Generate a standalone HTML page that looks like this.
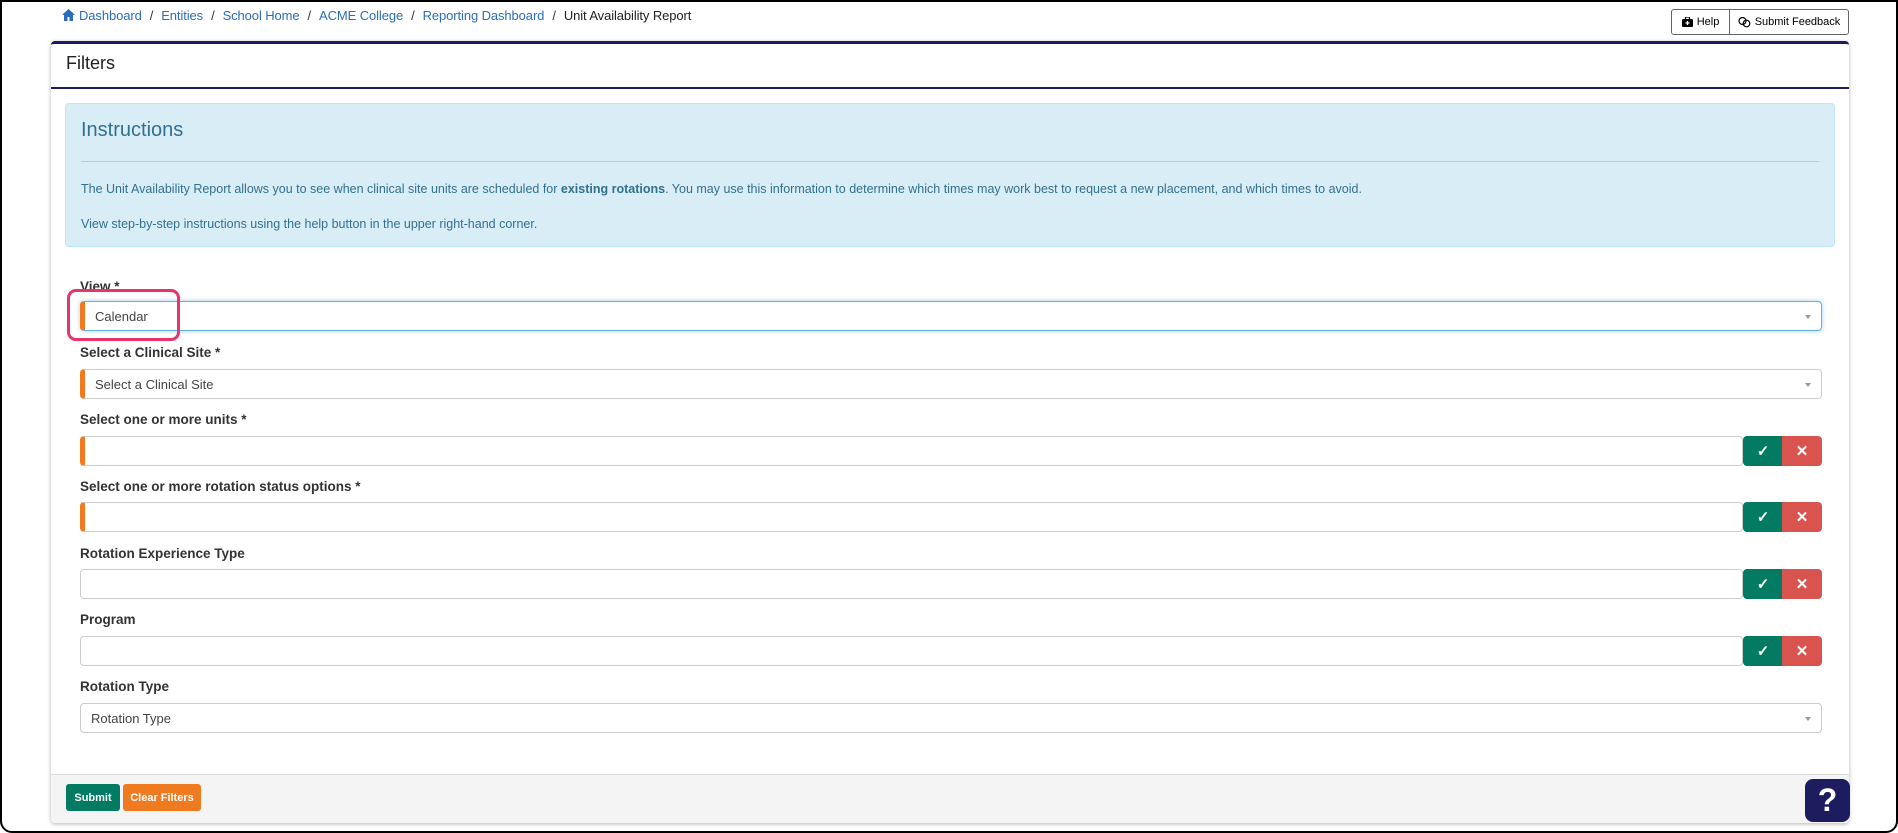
<!DOCTYPE html>
<html><head><meta charset="utf-8"><style>
*{box-sizing:border-box;margin:0;padding:0}
body{width:1898px;height:833px;background:#fff;font-family:"Liberation Sans",sans-serif;position:relative;overflow:hidden;color:#333}
.frame{position:absolute;left:0;top:0;width:1898px;height:833px;border:2px solid #000;border-radius:0 0 12px 12px;pointer-events:none;z-index:10}
.abs{position:absolute}
.bc{left:62px;top:8px;font-size:13px;color:#2a6ebb;white-space:nowrap;letter-spacing:-0.1px}
.bc span.s{color:#333;margin:0 8px}
.bc .cur{color:#222}
.hb{top:9px;height:26px;border:1px solid #666;background:#fff;font-size:11px;color:#000;display:flex;align-items:center;justify-content:center;gap:4px}
.card{left:51px;top:41px;width:1798px;height:782px;border-top:3px solid #1c1c5e;border-radius:4px;box-shadow:0 1px 4px rgba(0,0,0,.3);background:#fff}
.hdr{left:51px;top:44px;width:1798px;height:45px;border-bottom:2px solid #1c1c5e}
.hdr div{position:absolute;left:15px;top:9px;font-size:18px;color:#222}
.ins{left:65px;top:103px;width:1770px;height:144px;background:#d9edf7;border:1px solid #bce8f1;border-radius:4px;color:#31708f}
.ins h3{position:absolute;left:15px;top:15px;font-size:20px;font-weight:normal}
.ins hr{position:absolute;left:15px;right:15px;top:57px;border:0;border-top:1px solid #a6d3e3}
.ins p{position:absolute;left:15px;font-size:12.5px}
.lbl{left:80px;font-size:13.5px;font-weight:bold;color:#333}
.inp{left:80px;width:1663px;height:30px;border:1px solid #ccc;border-radius:4px;background:#fff}
.sel{width:1742px}
.or{border-left:5px solid #f07a1f}
.inp .t{position:absolute;left:10px;top:7px;font-size:13px;color:#444}
.inp .car{position:absolute;right:10px;top:13px;border:3px solid transparent;border-top:4px solid #999}
.ok,.no{width:40px;height:30px;color:#fff;display:flex;align-items:center;justify-content:center;font-size:15px;font-weight:bold}
.ok{left:1743px;background:#037b62;border-radius:4px 0 0 4px}
.no{left:1782px;background:#d9534f;border-radius:0 4px 4px 0}
.foot{left:51px;top:774px;width:1798px;height:49px;background:#f4f4f4;border-top:1px solid #ddd;border-radius:0 0 4px 4px}
.btn{top:784px;height:27px;color:#fff;font-size:11px;font-weight:bold;display:flex;align-items:center;justify-content:center;border-radius:3px}
</style></head><body>
<div class="frame"></div>
<div class="abs bc"><svg width="13" height="12" viewBox="0 0 13 12" style="vertical-align:-1px;margin-right:4px"><path d="M6.5 0L0 6h2v6h3.5V8h2v4H11V6h2z" fill="#2a6ebb"/></svg>Dashboard<span class="s">/</span>Entities<span class="s">/</span>School Home<span class="s">/</span>ACME College<span class="s">/</span>Reporting Dashboard<span class="s">/</span><span class="cur">Unit Availability Report</span></div>
<div class="abs hb" style="left:1671px;width:59px;border-radius:3px 0 0 3px"><svg width="11" height="10" viewBox="0 0 11 10"><rect x="0" y="2" width="11" height="8" rx="1" fill="#000"/><rect x="3.5" y="0" width="4" height="3" fill="none" stroke="#000" stroke-width="1.2"/><path d="M5.5 4v4M3.5 6h4" stroke="#fff" stroke-width="1.3"/></svg><b style="font-weight:normal">Help</b></div>
<div class="abs hb" style="left:1729px;width:120px;border-radius:0 3px 3px 0"><svg width="13" height="11" viewBox="0 0 13 11"><circle cx="4.5" cy="4" r="3.5" fill="none" stroke="#000" stroke-width="1.2"/><circle cx="8.5" cy="6.5" r="3.3" fill="none" stroke="#000" stroke-width="1.2"/></svg>Submit Feedback</div>
<div class="abs card"></div>
<div class="abs hdr"><div>Filters</div></div>
<div class="abs ins"><h3>Instructions</h3><hr><p style="top:78px">The Unit Availability Report allows you to see when clinical site units are scheduled for <b>existing rotations</b>. You may use this information to determine which times may work best to request a new placement, and which times to avoid.</p><p style="top:113px">View step-by-step instructions using the help button in the upper right-hand corner.</p></div>

<div class="abs lbl" style="top:279px">View *</div>
<div class="abs inp sel or" style="top:301px;border-color:#66afe9;border-left-color:#f07a1f;box-shadow:0 0 5px rgba(102,175,233,.6)"><span class="t">Calendar</span><span class="car"></span></div>
<div class="abs" style="left:67px;top:289px;width:113px;height:52px;border:3px solid #e8336b;border-radius:9px"></div>

<div class="abs lbl" style="top:345px">Select a Clinical Site *</div>
<div class="abs inp sel or" style="top:369px"><span class="t">Select a Clinical Site</span><span class="car"></span></div>

<div class="abs lbl" style="top:412px">Select one or more units *</div>
<div class="abs inp or" style="top:436px"></div><div class="abs ok" style="top:436px">✓</div><div class="abs no" style="top:436px">✕</div>

<div class="abs lbl" style="top:479px">Select one or more rotation status options *</div>
<div class="abs inp or" style="top:502px"></div><div class="abs ok" style="top:502px">✓</div><div class="abs no" style="top:502px">✕</div>

<div class="abs lbl" style="top:546px">Rotation Experience Type</div>
<div class="abs inp" style="top:569px"></div><div class="abs ok" style="top:569px">✓</div><div class="abs no" style="top:569px">✕</div>

<div class="abs lbl" style="top:612px">Program</div>
<div class="abs inp" style="top:636px"></div><div class="abs ok" style="top:636px">✓</div><div class="abs no" style="top:636px">✕</div>

<div class="abs lbl" style="top:679px">Rotation Type</div>
<div class="abs inp sel" style="top:703px"><span class="t">Rotation Type</span><span class="car"></span></div>

<div class="abs foot"></div>
<div class="abs btn" style="left:66px;width:54px;background:#037b62">Submit</div>
<div class="abs btn" style="left:123px;width:78px;background:#f07a1f">Clear Filters</div>
<div class="abs" style="left:1805px;top:779px;width:45px;height:43px;background:#1c1c5e;border-radius:8px;color:#fff;font-size:32px;font-weight:bold;display:flex;align-items:center;justify-content:center">?</div>
</body></html>
